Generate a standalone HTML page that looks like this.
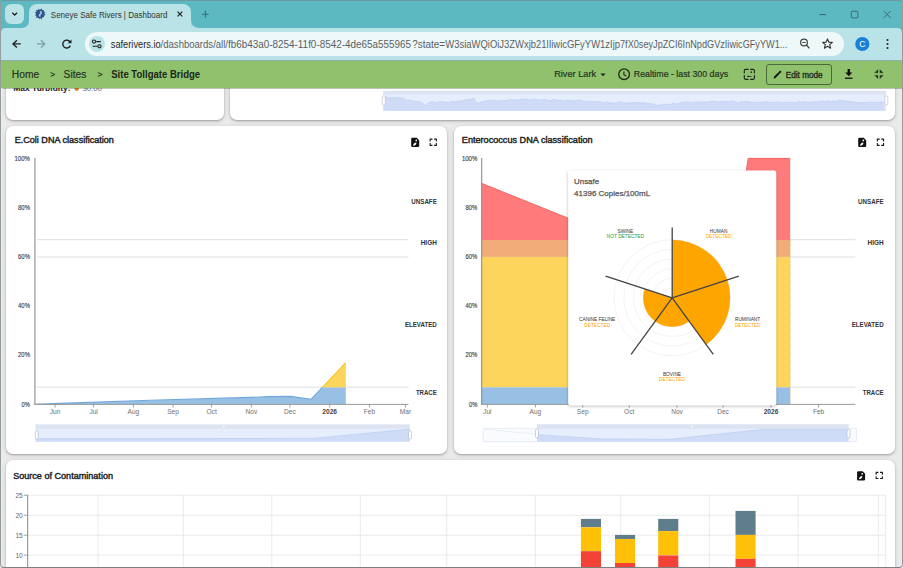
<!DOCTYPE html>
<html><head><meta charset="utf-8">
<style>
*{box-sizing:border-box;margin:0;padding:0}
html,body{width:903px;height:568px;overflow:hidden;background:#ebebeb;font-family:"Liberation Sans",sans-serif}
.a{position:absolute}
.t{position:absolute;white-space:nowrap;line-height:1}
.card{position:absolute;background:#fff;border-radius:7px;box-shadow:0 1px 2px rgba(0,0,0,.26),0 1px 5px rgba(0,0,0,.12)}
svg{position:absolute;left:0;top:0}
svg text{font-family:"Liberation Sans",sans-serif}
</style></head><body>

<!-- ===== cards ===== -->
<div class="card" style="left:6px;top:60px;width:217.8px;height:60.2px"></div>
<div class="card" style="left:229.5px;top:60px;width:665.5px;height:60px"></div>
<div class="card" style="left:6px;top:125.5px;width:441.3px;height:328.5px"></div>
<div class="card" style="left:453.5px;top:125.5px;width:441.5px;height:328.5px"></div>
<div class="card" style="left:6px;top:460px;width:889px;height:120px"></div>

<svg id="charts" width="903" height="568" viewBox="0 0 903 568">
<!-- top row partial card content -->
<text x="13.3" y="91.2" font-size="8.8" font-weight="700" fill="#222" textLength="57.2" lengthAdjust="spacingAndGlyphs">Max Turbidity:</text>
<circle cx="76.7" cy="88.6" r="2.3" fill="#d9822b"/>
<text x="82.4" y="91.2" font-size="7.8" fill="#666">30.00</text>
<!-- top-right slider -->
<rect x="383" y="90.8" width="503" height="20" fill="#e6edfc"/>
<circle cx="634.5" cy="92.6" r="0.9" fill="#fff"/>
<rect x="383" y="90.8" width="503" height="3.8" fill="#dde3f0"/>
<path d="M383.5 110.8 L383.5 98.6 386.0 96.6 388.5 98.0 391.0 97.7 393.5 97.8 396.0 98.0 398.5 97.2 401.0 98.1 403.5 97.9 406.0 100.5 408.5 99.9 411.0 100.5 413.5 101.2 416.0 101.4 418.5 101.6 421.0 102.2 423.5 104.0 426.0 105.9 428.5 102.9 431.0 101.7 433.5 101.9 436.0 102.6 438.5 102.2 441.0 101.7 443.5 101.9 446.0 102.2 448.5 102.8 451.0 101.7 453.5 101.6 456.0 102.1 458.5 101.2 461.0 101.0 463.5 100.7 466.0 99.8 468.5 99.5 471.0 99.8 473.5 98.2 476.0 102.2 478.5 103.6 481.0 102.0 483.5 101.7 486.0 101.1 488.5 100.5 491.0 100.2 493.5 100.6 496.0 100.6 498.5 101.2 501.0 100.8 503.5 100.4 506.0 100.7 508.5 100.0 511.0 99.6 513.5 100.1 516.0 100.0 518.5 99.6 521.0 99.2 523.5 99.7 526.0 98.5 528.5 100.0 531.0 100.0 533.5 99.1 536.0 99.9 538.5 99.5 541.0 100.4 543.5 99.2 546.0 99.8 548.5 100.6 551.0 100.8 553.5 99.3 556.0 100.1 558.5 100.5 561.0 100.1 563.5 101.1 566.0 99.9 568.5 100.6 571.0 100.0 573.5 101.1 576.0 100.5 578.5 100.3 581.0 99.8 583.5 101.6 586.0 101.3 588.5 101.6 591.0 101.9 593.5 101.8 596.0 101.6 598.5 101.7 601.0 101.9 603.5 103.1 606.0 102.0 608.5 102.6 611.0 102.8 613.5 103.0 616.0 103.2 618.5 102.3 621.0 102.0 623.5 102.8 626.0 103.3 628.5 103.0 631.0 102.7 633.5 102.5 636.0 102.7 638.5 102.4 641.0 103.1 643.5 102.6 646.0 103.2 648.5 103.4 651.0 103.9 653.5 104.0 656.0 105.3 658.5 105.0 661.0 105.3 663.5 103.9 666.0 104.7 668.5 104.3 671.0 104.5 673.5 102.9 676.0 104.1 678.5 103.8 681.0 102.4 683.5 102.2 686.0 102.0 688.5 102.0 691.0 102.2 693.5 102.8 696.0 101.8 698.5 102.2 701.0 101.9 703.5 102.5 706.0 102.0 708.5 102.3 711.0 101.1 713.5 101.5 716.0 101.2 718.5 102.2 721.0 101.8 723.5 101.5 726.0 101.4 728.5 101.9 731.0 101.4 733.5 101.3 736.0 102.0 738.5 103.0 741.0 101.8 743.5 101.7 746.0 101.5 748.5 101.4 751.0 102.3 753.5 102.5 756.0 102.2 758.5 102.3 761.0 102.3 763.5 102.3 766.0 101.6 768.5 102.2 771.0 102.5 773.5 102.1 776.0 102.3 778.5 102.1 781.0 102.3 783.5 102.8 786.0 102.2 788.5 102.2 791.0 102.6 793.5 102.5 796.0 102.9 798.5 101.2 801.0 102.5 803.5 101.8 806.0 102.1 808.5 102.3 811.0 102.3 813.5 102.1 816.0 101.6 818.5 102.2 821.0 101.2 823.5 101.2 826.0 101.5 828.5 100.8 831.0 101.9 833.5 101.3 836.0 101.7 838.5 100.6 841.0 100.3 843.5 100.8 846.0 101.4 848.5 101.0 851.0 101.7 853.5 101.8 856.0 102.8 858.5 102.1 861.0 103.1 863.5 102.6 866.0 102.5 868.5 102.4 871.0 102.0 873.5 102.4 876.0 102.6 878.5 102.1 881.0 102.1 883.5 102.4 L885.5 110.8 Z" fill="#cfdcf7"/>
<path d="M383.5 98.6 386.0 96.6 388.5 98.0 391.0 97.7 393.5 97.8 396.0 98.0 398.5 97.2 401.0 98.1 403.5 97.9 406.0 100.5 408.5 99.9 411.0 100.5 413.5 101.2 416.0 101.4 418.5 101.6 421.0 102.2 423.5 104.0 426.0 105.9 428.5 102.9 431.0 101.7 433.5 101.9 436.0 102.6 438.5 102.2 441.0 101.7 443.5 101.9 446.0 102.2 448.5 102.8 451.0 101.7 453.5 101.6 456.0 102.1 458.5 101.2 461.0 101.0 463.5 100.7 466.0 99.8 468.5 99.5 471.0 99.8 473.5 98.2 476.0 102.2 478.5 103.6 481.0 102.0 483.5 101.7 486.0 101.1 488.5 100.5 491.0 100.2 493.5 100.6 496.0 100.6 498.5 101.2 501.0 100.8 503.5 100.4 506.0 100.7 508.5 100.0 511.0 99.6 513.5 100.1 516.0 100.0 518.5 99.6 521.0 99.2 523.5 99.7 526.0 98.5 528.5 100.0 531.0 100.0 533.5 99.1 536.0 99.9 538.5 99.5 541.0 100.4 543.5 99.2 546.0 99.8 548.5 100.6 551.0 100.8 553.5 99.3 556.0 100.1 558.5 100.5 561.0 100.1 563.5 101.1 566.0 99.9 568.5 100.6 571.0 100.0 573.5 101.1 576.0 100.5 578.5 100.3 581.0 99.8 583.5 101.6 586.0 101.3 588.5 101.6 591.0 101.9 593.5 101.8 596.0 101.6 598.5 101.7 601.0 101.9 603.5 103.1 606.0 102.0 608.5 102.6 611.0 102.8 613.5 103.0 616.0 103.2 618.5 102.3 621.0 102.0 623.5 102.8 626.0 103.3 628.5 103.0 631.0 102.7 633.5 102.5 636.0 102.7 638.5 102.4 641.0 103.1 643.5 102.6 646.0 103.2 648.5 103.4 651.0 103.9 653.5 104.0 656.0 105.3 658.5 105.0 661.0 105.3 663.5 103.9 666.0 104.7 668.5 104.3 671.0 104.5 673.5 102.9 676.0 104.1 678.5 103.8 681.0 102.4 683.5 102.2 686.0 102.0 688.5 102.0 691.0 102.2 693.5 102.8 696.0 101.8 698.5 102.2 701.0 101.9 703.5 102.5 706.0 102.0 708.5 102.3 711.0 101.1 713.5 101.5 716.0 101.2 718.5 102.2 721.0 101.8 723.5 101.5 726.0 101.4 728.5 101.9 731.0 101.4 733.5 101.3 736.0 102.0 738.5 103.0 741.0 101.8 743.5 101.7 746.0 101.5 748.5 101.4 751.0 102.3 753.5 102.5 756.0 102.2 758.5 102.3 761.0 102.3 763.5 102.3 766.0 101.6 768.5 102.2 771.0 102.5 773.5 102.1 776.0 102.3 778.5 102.1 781.0 102.3 783.5 102.8 786.0 102.2 788.5 102.2 791.0 102.6 793.5 102.5 796.0 102.9 798.5 101.2 801.0 102.5 803.5 101.8 806.0 102.1 808.5 102.3 811.0 102.3 813.5 102.1 816.0 101.6 818.5 102.2 821.0 101.2 823.5 101.2 826.0 101.5 828.5 100.8 831.0 101.9 833.5 101.3 836.0 101.7 838.5 100.6 841.0 100.3 843.5 100.8 846.0 101.4 848.5 101.0 851.0 101.7 853.5 101.8 856.0 102.8 858.5 102.1 861.0 103.1 863.5 102.6 866.0 102.5 868.5 102.4 871.0 102.0 873.5 102.4 876.0 102.6 878.5 102.1 881.0 102.1 883.5 102.4" fill="none" stroke="#b9cdf3" stroke-width="0.7"/>
<rect x="382.3" y="96" width="3" height="9" rx="1.2" fill="#fff" stroke="#b0b8c8" stroke-width="0.6"/>
<rect x="884.8" y="96" width="3" height="9" rx="1.2" fill="#fff" stroke="#b0b8c8" stroke-width="0.6"/>

<!-- ===== E.Coli chart ===== -->
<text x="14.7" y="143.1" font-size="9" fill="#222" stroke="#222" stroke-width="0.42" textLength="99.2" lengthAdjust="spacingAndGlyphs">E.Coli DNA classification</text>
<!-- icons -->
<g transform="translate(411.2,137.8)">
 <path d="M1.2 0 H5.6 L8 2.6 V8 Q8 9.2 6.8 9.2 H1.2 Q0 9.2 0 8 V1.2 Q0 0 1.2 0 Z" fill="#111"/>
 <circle cx="5.1" cy="2.6" r="0.85" fill="#fff"/>
 <path d="M1.9 8.1 Q2 5.2 5.3 4.8 Q5.1 7.9 1.9 8.1 Z" fill="#fff"/>
</g>
<g fill="none" stroke="#1a1a1a" stroke-width="1.1" stroke-linejoin="miter"><path d="M430.15 141.45 V139.15 H432.45 M434.05 139.15 H436.35 V141.45 M436.35 143.05 V145.35 H434.05 M432.45 145.35 H430.15 V143.05"/></g>
<!-- grid/threshold lines -->
<g stroke="#dcdcdc" stroke-width="0.9">
 <line x1="36.8" y1="239.7" x2="408.5" y2="239.7"/>
 <line x1="36.8" y1="257" x2="408.5" y2="257"/>
 <line x1="36.8" y1="387.2" x2="408.5" y2="387.2"/>
</g>
<!-- areas -->
<path d="M35 404.4 L60 403.6 L150 400.5 L250 397.6 L270 396.8 L290.6 396.6 L311 399.5 L322.6 387.2 L345.8 387.2 L345.8 404.4 Z" fill="#98c0e5"/>
<path d="M35 404.2 L60 403.4 L150 400.3 L250 397.4 L270 396.6 L290.6 396.4 L311 399.3 L322.6 387.2" fill="none" stroke="#6fa8dc" stroke-width="1.1"/>
<path d="M322.6 387.2 L345.8 362.6 L345.8 387.2 Z" fill="#fed55c"/>
<path d="M322.6 387.2 L345.8 362.6" fill="none" stroke="#f9c22e" stroke-width="1.1"/>
<!-- axes -->
<line x1="34.9" y1="158" x2="34.9" y2="404.9" stroke="#8c8c8c" stroke-width="1.1"/>
<line x1="34.4" y1="404.4" x2="408.5" y2="404.4" stroke="#9a9a9a" stroke-width="1"/>
<g stroke="#8a8a8a" stroke-width="0.8">
 <line x1="55.1" y1="404.4" x2="55.1" y2="407.5"/><line x1="93.6" y1="404.4" x2="93.6" y2="407.5"/>
 <line x1="133.4" y1="404.4" x2="133.4" y2="407.5"/><line x1="173.1" y1="404.4" x2="173.1" y2="407.5"/>
 <line x1="211.6" y1="404.4" x2="211.6" y2="407.5"/><line x1="251.4" y1="404.4" x2="251.4" y2="407.5"/>
 <line x1="289.9" y1="404.4" x2="289.9" y2="407.5"/><line x1="329.7" y1="404.4" x2="329.7" y2="407.5"/>
 <line x1="369.5" y1="404.4" x2="369.5" y2="407.5"/><line x1="405.4" y1="404.4" x2="405.4" y2="407.5"/>
</g>
<g font-size="7.6" fill="#3a3a3a" stroke="#3a3a3a" stroke-width="0.15">
 <text x="14.5" y="160.6" textLength="15.4" lengthAdjust="spacingAndGlyphs">100%</text><text x="18.1" y="209.8" textLength="11.8" lengthAdjust="spacingAndGlyphs">80%</text><text x="18.1" y="259.0" textLength="11.8" lengthAdjust="spacingAndGlyphs">60%</text><text x="18.1" y="308.2" textLength="11.8" lengthAdjust="spacingAndGlyphs">40%</text><text x="18.1" y="357.4" textLength="11.8" lengthAdjust="spacingAndGlyphs">20%</text><text x="21.6" y="406.6" textLength="8.3" lengthAdjust="spacingAndGlyphs">0%</text>
</g>
<g font-size="6.6" fill="#707070" text-anchor="middle">
 <text x="55.1" y="414.2">Jun</text><text x="93.6" y="414.2">Jul</text><text x="133.4" y="414.2">Aug</text>
 <text x="173.1" y="414.2">Sep</text><text x="211.6" y="414.2">Oct</text><text x="251.4" y="414.2">Nov</text>
 <text x="289.9" y="414.2">Dec</text><text x="329.7" y="414.2" font-weight="700" fill="#444">2026</text>
 <text x="369.5" y="414.2">Feb</text><text x="405.4" y="414.2">Mar</text>
</g>
<g font-size="7" font-weight="700" fill="#333" lengthAdjust="spacingAndGlyphs">
 <text x="411.3" y="203.9" textLength="25.5" lengthAdjust="spacingAndGlyphs">UNSAFE</text><text x="420.7" y="245.3" textLength="16.1" lengthAdjust="spacingAndGlyphs">HIGH</text>
 <text x="404.9" y="327.1" textLength="31.9" lengthAdjust="spacingAndGlyphs">ELEVATED</text><text x="415.9" y="394.5" textLength="20.9" lengthAdjust="spacingAndGlyphs">TRACE</text>
</g>
<!-- slider -->
<rect x="35.7" y="424.5" width="374" height="17.2" fill="#e6edfc"/>
<rect x="35.7" y="424.5" width="374" height="4.2" fill="#dde3f0"/>
<path d="M35.7 441.7 V438.8 L313 438.4 L409.7 429.2 V441.7 Z" fill="#cfdcf7"/>
<path d="M35.7 438.8 L313 438.4 L409.7 429.2" fill="none" stroke="#bccff3" stroke-width="0.8"/>
<circle cx="223.9" cy="426.6" r="0.9" fill="#fff"/>
<rect x="35.3" y="430.7" width="3" height="8.3" rx="1.3" fill="#fff" stroke="#aab4c6" stroke-width="0.6"/>
<rect x="408.5" y="430.7" width="3" height="8.3" rx="1.3" fill="#fff" stroke="#aab4c6" stroke-width="0.6"/>

<!-- ===== Enterococcus chart ===== -->
<text x="461.8" y="143.1" font-size="9" fill="#222" stroke="#222" stroke-width="0.42" textLength="130.8" lengthAdjust="spacingAndGlyphs">Enterococcus DNA classification</text>
<g transform="translate(858.2,137.8)">
 <path d="M1.2 0 H5.6 L8 2.6 V8 Q8 9.2 6.8 9.2 H1.2 Q0 9.2 0 8 V1.2 Q0 0 1.2 0 Z" fill="#111"/>
 <circle cx="5.1" cy="2.6" r="0.85" fill="#fff"/>
 <path d="M1.9 8.1 Q2 5.2 5.3 4.8 Q5.1 7.9 1.9 8.1 Z" fill="#fff"/>
</g>
<g fill="none" stroke="#1a1a1a" stroke-width="1.1" stroke-linejoin="miter"><path d="M877.35 141.45 V139.15 H879.65 M881.25 139.15 H883.55 V141.45 M883.55 143.05 V145.35 H881.25 M879.65 145.35 H877.35 V143.05"/></g>
<g stroke="#dcdcdc" stroke-width="0.9">
 <line x1="483.6" y1="239.7" x2="855.4" y2="239.7"/>
 <line x1="483.6" y1="257" x2="855.4" y2="257"/>
 <line x1="483.6" y1="387.2" x2="855.4" y2="387.2"/>
</g>
<rect x="481.7" y="387.2" width="308.5" height="17.2" fill="#98c0e5"/>
<rect x="481.7" y="256.9" width="308.5" height="130.3" fill="#fed55c"/>
<rect x="481.7" y="240" width="308.5" height="16.9" fill="#f2ac79"/>
<path d="M481.7 183.4 L622.2 240 L735.3 240 L748.2 158.4 L790.2 158.4 L790.2 240 L481.7 240 Z" fill="#ff7b7b"/>
<path d="M481.7 183.4 L622.2 240 M735.3 240 L748.2 158.4 L790.2 158.4" fill="none" stroke="#f46262" stroke-width="1"/>
<line x1="790.2" y1="240" x2="790.2" y2="404" stroke="#d8b45a" stroke-width="0.6" stroke-dasharray="1,1"/>
<line x1="481.7" y1="158" x2="481.7" y2="404.9" stroke="#8c8c8c" stroke-width="1.1"/>
<line x1="481.2" y1="404.4" x2="855.4" y2="404.4" stroke="#9a9a9a" stroke-width="1"/>
<g stroke="#8a8a8a" stroke-width="0.8">
 <line x1="487.3" y1="404.4" x2="487.3" y2="407.5"/><line x1="535.4" y1="404.4" x2="535.4" y2="407.5"/>
 <line x1="582.7" y1="404.4" x2="582.7" y2="407.5"/><line x1="629.2" y1="404.4" x2="629.2" y2="407.5"/>
 <line x1="677" y1="404.4" x2="677" y2="407.5"/><line x1="723" y1="404.4" x2="723" y2="407.5"/>
 <line x1="771" y1="404.4" x2="771" y2="407.5"/><line x1="818.6" y1="404.4" x2="818.6" y2="407.5"/>
</g>
<g font-size="7.6" fill="#3a3a3a" stroke="#3a3a3a" stroke-width="0.15">
 <text x="461.9" y="160.6" textLength="15.4" lengthAdjust="spacingAndGlyphs">100%</text><text x="465.5" y="209.8" textLength="11.8" lengthAdjust="spacingAndGlyphs">80%</text><text x="465.5" y="259.0" textLength="11.8" lengthAdjust="spacingAndGlyphs">60%</text><text x="465.5" y="308.2" textLength="11.8" lengthAdjust="spacingAndGlyphs">40%</text><text x="465.5" y="357.4" textLength="11.8" lengthAdjust="spacingAndGlyphs">20%</text><text x="469.0" y="406.6" textLength="8.3" lengthAdjust="spacingAndGlyphs">0%</text>
</g>
<g font-size="6.6" fill="#707070" text-anchor="middle">
 <text x="487.3" y="414.2">Jul</text><text x="535.4" y="414.2">Aug</text><text x="582.7" y="414.2">Sep</text>
 <text x="629.2" y="414.2">Oct</text><text x="677" y="414.2">Nov</text><text x="723" y="414.2">Dec</text>
 <text x="771" y="414.2" font-weight="700" fill="#444">2026</text><text x="818.6" y="414.2">Feb</text>
</g>
<g font-size="7" font-weight="700" fill="#333">
 <text x="858.1" y="203.9" textLength="25.5" lengthAdjust="spacingAndGlyphs">UNSAFE</text><text x="867.5" y="245.3" textLength="16.1" lengthAdjust="spacingAndGlyphs">HIGH</text>
 <text x="851.7" y="327.1" textLength="31.9" lengthAdjust="spacingAndGlyphs">ELEVATED</text><text x="862.7" y="394.5" textLength="20.9" lengthAdjust="spacingAndGlyphs">TRACE</text>
</g>
<!-- slider -->
<rect x="483.2" y="428.4" width="373.3" height="13.3" rx="1.5" fill="#fafbfe" stroke="#d9e0ee" stroke-width="0.6"/>
<path d="M483.5 429.2 L537 434.2" fill="none" stroke="#e3e8f2" stroke-width="0.7"/>
<rect x="537" y="424.4" width="311.5" height="17.3" fill="#e6edfc"/>
<rect x="537" y="424.4" width="311.5" height="4.4" fill="#dde3f0"/>
<path d="M537 441.7 V434.7 L600 438.9 L670 439.3 L761 429.6 L848.5 429.4 V441.7 Z" fill="#cfdcf7"/>
<path d="M537 434.7 L600 438.9 L670 439.3 L761 429.6 L848.5 429.4" fill="none" stroke="#bccff3" stroke-width="0.8"/>
<circle cx="692" cy="426.6" r="0.9" fill="#fff"/>
<rect x="535.5" y="429.2" width="3" height="8.6" rx="1.3" fill="#fff" stroke="#aab4c6" stroke-width="0.6"/>
<rect x="847" y="429.2" width="3" height="8.6" rx="1.3" fill="#fff" stroke="#aab4c6" stroke-width="0.6"/>

<!-- tooltip -->
<defs>
 <filter id="tsh" x="-10%" y="-10%" width="120%" height="120%">
  <feGaussianBlur in="SourceAlpha" stdDeviation="1.8"/>
  <feOffset dx="0" dy="0.8"/>
  <feComponentTransfer><feFuncA type="linear" slope="0.3"/></feComponentTransfer>
  <feMerge><feMergeNode/><feMergeNode in="SourceGraphic"/></feMerge>
 </filter>
</defs>
<rect x="568.2" y="170.4" width="208" height="234.8" rx="2" fill="#fff" filter="url(#tsh)"/>
<text x="574.1" y="184.3" font-size="8" fill="#555" stroke="#555" stroke-width="0.25" textLength="25" lengthAdjust="spacingAndGlyphs">Unsafe</text>
<text x="574.1" y="196" font-size="8" fill="#555" stroke="#555" stroke-width="0.25" textLength="76" lengthAdjust="spacingAndGlyphs">41396 Copies/100mL</text>
<!-- radar rings -->
<g fill="none" stroke="#f0f0f0" stroke-width="0.8">
 <circle cx="672.2" cy="297.8" r="9.7"/><circle cx="672.2" cy="297.8" r="19.4"/><circle cx="672.2" cy="297.8" r="29"/>
 <circle cx="672.2" cy="297.8" r="38.7"/><circle cx="672.2" cy="297.8" r="48.4"/><circle cx="672.2" cy="297.8" r="58.1"/>
</g>
<path d="M672.2 297.8 L672.2 239.8 A58 58 0 0 1 706.3 344.7 L689.2 321.3 A29 29 0 0 1 644.6 288.8 Z" fill="#ffa500"/>
<g stroke="#444" stroke-width="1.3" fill="none">
 <path d="M672.2 297.8 L672.2 227.5 M672.2 297.8 L738.8 276.2 M672.2 297.8 L713.3 354.4 M672.2 297.8 L631.1 354.4 M672.2 297.8 L605.6 276.2"/>
</g>
<g font-size="4.8" text-anchor="middle">
 <text x="625.4" y="233" fill="#333">SWINE</text><text x="625.4" y="238.4" fill="#2e9a3a">NOT DETECTED</text>
 <text x="718.6" y="233" fill="#333">HUMAN</text><text x="718.6" y="238.4" fill="#ffa500">DETECTED</text>
 <text x="747.6" y="321.2" fill="#333">RUMINANT</text><text x="747.6" y="326.6" fill="#ffa500">DETECTED</text>
 <text x="597.2" y="321.2" fill="#333">CANINE FELINE</text><text x="597.2" y="326.6" fill="#ffa500">DETECTED</text>
 <text x="672" y="375.5" fill="#333">BOVINE</text><text x="672" y="380.9" fill="#ffa500">DETECTED</text>
</g>

<!-- ===== Source of Contamination ===== -->
<text x="13.2" y="478.6" font-size="9" fill="#222" stroke="#222" stroke-width="0.42" textLength="99.8" lengthAdjust="spacingAndGlyphs">Source of Contamination</text>
<g transform="translate(857.1,471.2)">
 <path d="M1.2 0 H5.6 L8 2.6 V8 Q8 9.2 6.8 9.2 H1.2 Q0 9.2 0 8 V1.2 Q0 0 1.2 0 Z" fill="#111"/>
 <circle cx="5.1" cy="2.6" r="0.85" fill="#fff"/>
 <path d="M1.9 8.1 Q2 5.2 5.3 4.8 Q5.1 7.9 1.9 8.1 Z" fill="#fff"/>
</g>
<g fill="none" stroke="#1a1a1a" stroke-width="1.1" stroke-linejoin="miter"><path d="M876.15 474.65 V472.35 H878.45 M880.05 472.35 H882.35 V474.65 M882.35 476.25 V478.55 H880.05 M878.45 478.55 H876.15 V476.25"/></g>
<g stroke="#e8e8e8" stroke-width="0.9">
 <line x1="27.7" y1="495.2" x2="885.7" y2="495.2"/><line x1="27.7" y1="515.2" x2="885.7" y2="515.2"/>
 <line x1="27.7" y1="535.2" x2="885.7" y2="535.2"/><line x1="27.7" y1="555.1" x2="885.7" y2="555.1"/>
 <line x1="98.1" y1="495.2" x2="98.1" y2="568"/><line x1="183.3" y1="495.2" x2="183.3" y2="568"/>
 <line x1="271.8" y1="495.2" x2="271.8" y2="568"/><line x1="360.4" y1="495.2" x2="360.4" y2="568"/>
 <line x1="446.8" y1="495.2" x2="446.8" y2="568"/><line x1="535.4" y1="495.2" x2="535.4" y2="568"/>
 <line x1="620.8" y1="495.2" x2="620.8" y2="568"/><line x1="709.3" y1="495.2" x2="709.3" y2="568"/>
 <line x1="798.1" y1="495.2" x2="798.1" y2="568"/><line x1="878.3" y1="495.2" x2="878.3" y2="568"/>
 <line x1="885.7" y1="495.2" x2="885.7" y2="568"/>
</g>
<line x1="27.7" y1="494.9" x2="27.7" y2="568" stroke="#888" stroke-width="1"/>
<g stroke="#888" stroke-width="0.8">
 <line x1="23.7" y1="495.2" x2="27.7" y2="495.2"/><line x1="23.7" y1="515.2" x2="27.7" y2="515.2"/>
 <line x1="23.7" y1="535.2" x2="27.7" y2="535.2"/><line x1="23.7" y1="555.1" x2="27.7" y2="555.1"/>
</g>
<g font-size="6.6" fill="#666" text-anchor="end">
 <text x="22.8" y="497.6">25</text><text x="22.8" y="517.6">20</text><text x="22.8" y="537.6">15</text><text x="22.8" y="557.5">10</text>
</g>
<!-- bars -->
<g>
 <rect x="580.9" y="518.9" width="20.1" height="8.4" fill="#607d8b"/>
 <rect x="580.9" y="527.3" width="20.1" height="23.9" fill="#ffc107"/>
 <rect x="580.9" y="551.2" width="20.1" height="20" fill="#f44336"/>
 <rect x="615" y="534.9" width="20.1" height="4.1" fill="#607d8b"/>
 <rect x="615" y="539.0" width="20.1" height="24" fill="#ffc107"/>
 <rect x="615" y="563.0" width="20.1" height="10" fill="#f44336"/>
 <rect x="658.2" y="518.9" width="20.1" height="12.2" fill="#607d8b"/>
 <rect x="658.2" y="531.1" width="20.1" height="23.9" fill="#ffc107"/>
 <rect x="658.2" y="555.4" width="20.1" height="20" fill="#f44336"/>
 <rect x="735.5" y="510.9" width="20.1" height="24" fill="#607d8b"/>
 <rect x="735.5" y="534.9" width="20.1" height="23.9" fill="#ffc107"/>
 <rect x="735.5" y="558.8" width="20.1" height="20" fill="#f44336"/>
</g>
</svg>

<!-- ===== browser chrome ===== -->
<div class="a" style="left:0;top:0;width:903px;height:28px;background:#5cb8c1"></div>
<div class="a" style="left:5px;top:4.3px;width:19.3px;height:19.3px;border-radius:6px;background:#b9e3e6"></div>
<div class="a" style="left:29px;top:4px;width:162.2px;height:26px;border-radius:8px 8px 0 0;background:#b9e3e6"></div>
<div class="a" style="left:0;top:28px;width:903px;height:32.5px;background:#b9e3e6"></div>
<div class="a" style="left:85px;top:32.3px;width:759px;height:23.5px;border-radius:12px;background:#eef8f9"></div>
<div class="a" style="left:88.6px;top:35.7px;width:16.2px;height:16.2px;border-radius:50%;background:#b9e3e6"></div>


<div class="a" style="left:0;top:60.2px;width:903px;height:0.6px;background:#8fb0a8"></div>
<div class="a" style="left:0;top:60.6px;width:903px;height:27.7px;background:#90c16d;box-shadow:0 0.6px 0.8px rgba(60,90,40,.35)"></div>







<div class="a" style="left:766.2px;top:64.3px;width:66px;height:20.4px;border:1px solid #4a6a3c;border-radius:3px"></div>

<svg width="903" height="90" viewBox="0 0 903 90" style="z-index:2">
 <!-- chevron -->
 <path d="M12.3 12.7 L14.7 15 L17.1 12.7" fill="none" stroke="#222" stroke-width="1.3"/>
 <!-- favicon -->
 <g transform="translate(40.1,13.9)">
  <circle r="4.4" fill="#2d548a"/>
  <path d="M4.00 -0.07 L5.81 1.02 L3.73 1.43 L3.50 1.94 L4.06 3.41 L2.52 3.11 L1.75 3.60 L1.55 5.80 L0.28 3.99 L0.07 4.00 L-0.96 5.42 L-1.43 3.73 L-2.24 3.32 L-4.31 4.31 L-3.32 2.24 L-3.43 2.06 L-4.89 1.78 L-3.95 0.63 L-3.99 -0.28 L-5.60 -1.50 L-3.60 -1.75 L-3.32 -2.24 L-4.24 -4.24 L-2.24 -3.32 L-2.06 -3.43 L-1.85 -5.07 L-0.63 -3.95 L0.28 -3.99 L1.55 -5.80 L1.75 -3.60 L2.24 -3.32 L3.89 -3.89 L3.32 -2.24 L3.43 -2.06 L5.54 -2.02 L3.95 -0.63 Z" fill="#2d548a"/>
  <path d="M0.5 -2.1 C1.6 -1.3 1.1 -0.2 0.2 0.3 C-0.7 0.8 -0.8 1.5 -0.2 2.1" fill="none" stroke="#9fc6d2" stroke-width="1.7" stroke-linecap="round"/>
 </g>
 <!-- tab close -->
 <path d="M177.5 11.6 L182.3 16.4 M182.3 11.6 L177.5 16.4" stroke="#222" stroke-width="1.2"/>
 <!-- new tab + -->
 <path d="M205.4 10.8 V17.6 M202 14.2 H208.8" stroke="#3d6e73" stroke-width="1.1"/>
 <!-- tab bottom flares -->
 <path d="M0 27.9 H6 Q1 27.9 1 33 V27.9 Z" fill="#5cb8c1"/>
 <path d="M903 27.9 H897 Q902 27.9 902 33 V27.9 Z" fill="#5cb8c1"/>
 <path d="M21 28 Q29 28 29 20 V28 Z" fill="#b9e3e6"/>
 <path d="M199.5 28 Q191.2 28 191.2 20 V28 Z" fill="#b9e3e6"/>
 <!-- window controls -->
 <path d="M819.2 14.6 H826.2" stroke="#3d6e73" stroke-width="1"/>
 <rect x="851.3" y="11.3" width="6.6" height="6.6" rx="1" fill="none" stroke="#3d6e73" stroke-width="1"/>
 <path d="M883.8 11 L890.6 17.8 M890.6 11 L883.8 17.8" stroke="#3d6e73" stroke-width="1"/>
 <!-- back -->
 <path d="M20.8 43.9 H13.5 M16.9 40.2 L13 43.9 L16.9 47.6" fill="none" stroke="#222" stroke-width="1.4"/>
 <!-- forward -->
 <path d="M37 43.9 H44.3 M40.9 40.2 L44.8 43.9 L40.9 47.6" fill="none" stroke="#80a0a3" stroke-width="1.3"/>
 <!-- reload -->
 <path d="M70.2 42.3 A3.9 3.9 0 1 0 70.3 45.6" fill="none" stroke="#222" stroke-width="1.4"/>
 <path d="M71.5 39.6 V43.3 H67.8 Z" fill="#222"/>
 <!-- site info -->
 <circle cx="94" cy="41.6" r="1.6" fill="none" stroke="#222" stroke-width="1.1"/>
 <path d="M96.2 41.6 H100.8 M92.6 46.3 H97.6" stroke="#222" stroke-width="1.1"/>
 <circle cx="99.5" cy="46.3" r="1.6" fill="none" stroke="#222" stroke-width="1.1"/>
 <!-- zoom -->
 <circle cx="804" cy="42.5" r="3.4" fill="none" stroke="#444" stroke-width="1.2"/>
 <path d="M802.3 42.5 H805.7 M806.5 45 L809.4 48.3" stroke="#444" stroke-width="1.2"/>
 <!-- star -->
 <path d="M827.5 38.9 L828.9 42.2 L832.4 42.4 L829.7 44.7 L830.6 48.2 L827.5 46.3 L824.4 48.2 L825.3 44.7 L822.6 42.4 L826.1 42.2 Z" fill="none" stroke="#333" stroke-width="1.1" stroke-linejoin="round"/>
 <!-- profile -->
 <circle cx="862.3" cy="44" r="7.1" fill="#1a7fd6"/>
 <text x="862.3" y="47.2" font-size="8.6" fill="#fff" text-anchor="middle">C</text>
 <!-- menu -->
 <circle cx="887.5" cy="40" r="1.05" fill="#222"/><circle cx="887.5" cy="44" r="1.05" fill="#222"/><circle cx="887.5" cy="48" r="1.05" fill="#222"/>
 <!-- dropdown triangle -->
 <path d="M600.3 73.4 L605.7 73.4 L603 76.2 Z" fill="#1e2a1a"/>
 <!-- clock -->
 <circle cx="624.1" cy="74.2" r="5.35" fill="none" stroke="#1e2a1a" stroke-width="1.35"/>
 <path d="M623.9 71.6 V74.7 L626.3 76.1" fill="none" stroke="#1e2a1a" stroke-width="1.15"/>
 <!-- screenshot icon -->
 <path d="M744.3 73.6 V70.5 Q744.3 69.3 745.5 69.3 H748.5999999999999 M750.1 69.3 H753.1999999999999 Q754.4 69.3 754.4 70.5 V73.6 M754.4 75.0 V78.1 Q754.4 79.3 753.1999999999999 79.3 H750.1 M748.5999999999999 79.3 H745.5 Q744.3 79.3 744.3 78.1 V75.0" fill="none" stroke="#1e2a1a" stroke-width="1.15"/>
 <path d="M746.8 77.1 L748.3 75.3 L749.7 76.5 L750.5 75.9 L752 77.1 Z" fill="#1e2a1a"/>
 <circle cx="751.3" cy="72.2" r="0.85" fill="#1e2a1a"/>
 <!-- pencil -->
 <path d="M774.6 77.5 L778.9 73.2" stroke="#111" stroke-width="1.9"/><path d="M779.5 72.6 L780.4 71.7" stroke="#111" stroke-width="1.9" stroke-linecap="round"/>
 <path d="M773.5 78.6 L774.3 76.6 L775.6 77.9 Z" fill="#111"/>
 <!-- download -->
 <path d="M847.6 69.1 H850 V72.6 H852.4 L848.8 76.2 L845.2 72.6 H847.6 Z" fill="#111"/>
 <rect x="845" y="77.6" width="7.5" height="1.3" fill="#111"/>
 <!-- fullscreen exit -->
 <path d="M878.00 72.85 L878.00 69.70 Q876.33 71.28 874.65 72.85 Z M879.90 72.85 L879.90 69.70 Q881.58 71.28 883.25 72.85 Z M878.00 75.45 L878.00 78.60 Q876.33 77.03 874.65 75.45 Z M879.90 75.45 L879.90 78.60 Q881.58 77.03 883.25 75.45 Z" fill="#1f2b1b" stroke="#1f2b1b" stroke-width="0.3" stroke-linejoin="round"/>
</svg>
<svg width="903" height="90" viewBox="0 0 903 90" style="z-index:2">
 <text x="50.8" y="17.8" font-size="8.5" fill="#333" textLength="116.6" lengthAdjust="spacingAndGlyphs">Seneye Safe Rivers | Dashboard</text>
 <g font-size="10.2" fill="#5b6163">
  <text x="110.8" y="47.8" fill="#1f1f1f" textLength="49.8" lengthAdjust="spacingAndGlyphs">saferivers.io</text>
  <text x="160.6" y="47.8" textLength="67.4" lengthAdjust="spacingAndGlyphs">/dashboards/all/</text>
  <text x="228" y="47.8" textLength="183" lengthAdjust="spacingAndGlyphs">fb6b43a0-8254-11f0-8542-4de65a555965</text>
  <text x="412.3" y="47.8" textLength="32.8" lengthAdjust="spacingAndGlyphs">?state=</text>
  <text x="445.3" y="47.8" textLength="174.7" lengthAdjust="spacingAndGlyphs">W3siaWQiOiJ3ZWxjb21lIiwicGFyYW1zIjp</text>
  <text x="620" y="47.8" textLength="167.4" lengthAdjust="spacingAndGlyphs">7fX0seyJpZCI6InNpdGVzIiwicGFyYW1...</text>
 </g>
 <g font-size="10" fill="#27351f" stroke="#27351f" stroke-width="0.2">
  <text x="11.8" y="77.7" textLength="27.4" lengthAdjust="spacingAndGlyphs">Home</text>
  <text x="63.6" y="77.7" textLength="22.7" lengthAdjust="spacingAndGlyphs">Sites</text>
  <text x="554.2" y="77.4" font-size="9.2" textLength="41.9" lengthAdjust="spacingAndGlyphs">River Lark</text>
  <text x="633.8" y="77.4" font-size="9" textLength="94.4" lengthAdjust="spacingAndGlyphs">Realtime - last 300 days</text>
  <text x="785.8" y="77.5" font-size="8.2" stroke-width="0.4" textLength="36.8" lengthAdjust="spacingAndGlyphs">Edit mode</text>
 </g>
 <path d="M50.6 72.6 L55 74.5 L50.6 76.4 M97.9 72.6 L102.3 74.5 L97.9 76.4" fill="none" stroke="#27351f" stroke-width="1"/>
 <text x="111.2" y="77.7" font-size="10.4" font-weight="700" fill="#1c2718" textLength="89" lengthAdjust="spacingAndGlyphs">Site Tollgate Bridge</text>
</svg>
<!-- window border -->
<div class="a" style="left:0;top:0;width:903px;height:568px;border:1px solid #959c9d;border-top-color:#6e9a9f;border-bottom-color:#7b7f80;border-radius:4px;z-index:3"></div>
</body></html>
